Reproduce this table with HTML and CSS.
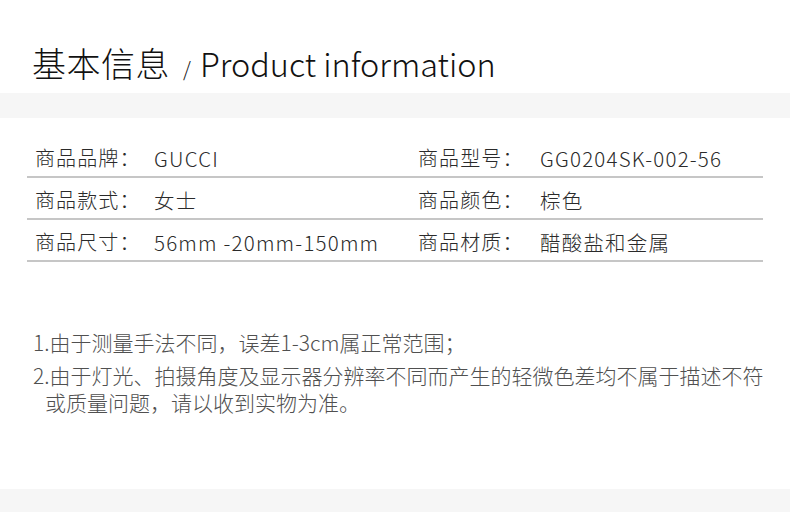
FILE: index.html
```html
<!DOCTYPE html>
<html lang="zh-CN">
<head>
<meta charset="utf-8">
<title>基本信息</title>
<link rel="stylesheet" href="styles.css">
</head>
<body>
<div class="page">
  <header class="title">
    <h1><span class="zh">基本信息</span><span class="slash">/</span><span class="en">Product information</span></h1>
  </header>
  <div class="band"></div>
  <section class="spec">
    <div class="row">
      <div class="cell left"><span class="label">商品品牌：</span><span class="value">GUCCI</span></div>
      <div class="cell right"><span class="label">商品型号：</span><span class="value">GG0204SK-002-56</span></div>
    </div>
    <div class="row">
      <div class="cell left"><span class="label">商品款式：</span><span class="value">女士</span></div>
      <div class="cell right"><span class="label">商品颜色：</span><span class="value">棕色</span></div>
    </div>
    <div class="row">
      <div class="cell left"><span class="label">商品尺寸：</span><span class="value">56mm -20mm-150mm</span></div>
      <div class="cell right"><span class="label">商品材质：</span><span class="value">醋酸盐和金属</span></div>
    </div>
  </section>
  <section class="notes">
    <p>1.由于测量手法不同，误差1-3cm属正常范围；</p>
    <p>2.由于灯光、拍摄角度及显示器分辨率不同而产生的轻微色差均不属于描述不符或质量问题，请以收到实物为准。</p>
  </section>
  <div class="band bottom"></div>
</div>
</body>
</html>
```

FILE: styles.css
```css
html, body {
  margin: 0;
  padding: 0;
  background: #ffffff;
}

body {
  font-family: "Noto Sans CJK SC", "Noto Sans", sans-serif;
  color: #333333;
}

.page {
  width: 790px;
  height: 512px;
  display: flex;
  flex-direction: column;
  overflow: hidden;
}

.title {
  height: 93px;
  padding-left: 32px;
  box-sizing: border-box;
  display: flex;
  align-items: flex-end;
}

.title h1 {
  margin: 0 0 4px 0;
  font-weight: 300;
  font-size: 34px;
  line-height: 40px;
  color: #111111;
  display: flex;
  align-items: baseline;
}

.title .zh {
  font-weight: 300;
  letter-spacing: 0.5px;
}

.title .slash {
  font-size: 20px;
  margin: 0 9px 0 13px;
}

.title .en {
  font-weight: 300;
  font-size: 32.4px;
}

.band {
  height: 25px;
  background: #f6f6f6;
  flex: none;
}

.band.bottom {
  height: 23px;
  margin-top: auto;
}

.spec {
  margin: 18px 27px 0 27px;
}

.row {
  display: grid;
  grid-template-columns: 383px 1fr;
  height: 40px;
  border-bottom: 2px solid #c6c6c6;
}

.cell {
  display: flex;
  align-items: center;
  padding: 3px 0 0 8px;
  font-size: 20px;
  font-weight: 300;
  letter-spacing: 1.1px;
  color: #2a2a2a;
}

.value {
  font-size: 20.5px;
  letter-spacing: 1.2px;
}

.label {
  width: 119px;
  flex: none;
}

.right .label {
  width: 122px;
}

.notes {
  margin: 67px 20px 0 33px;
  color: #505050;
  font-size: 21px;
  font-weight: 300;
  line-height: 27px;
}

.notes p {
  margin: 0 0 6px 0;
  padding-left: 12px;
  text-indent: -12px;
}
```
